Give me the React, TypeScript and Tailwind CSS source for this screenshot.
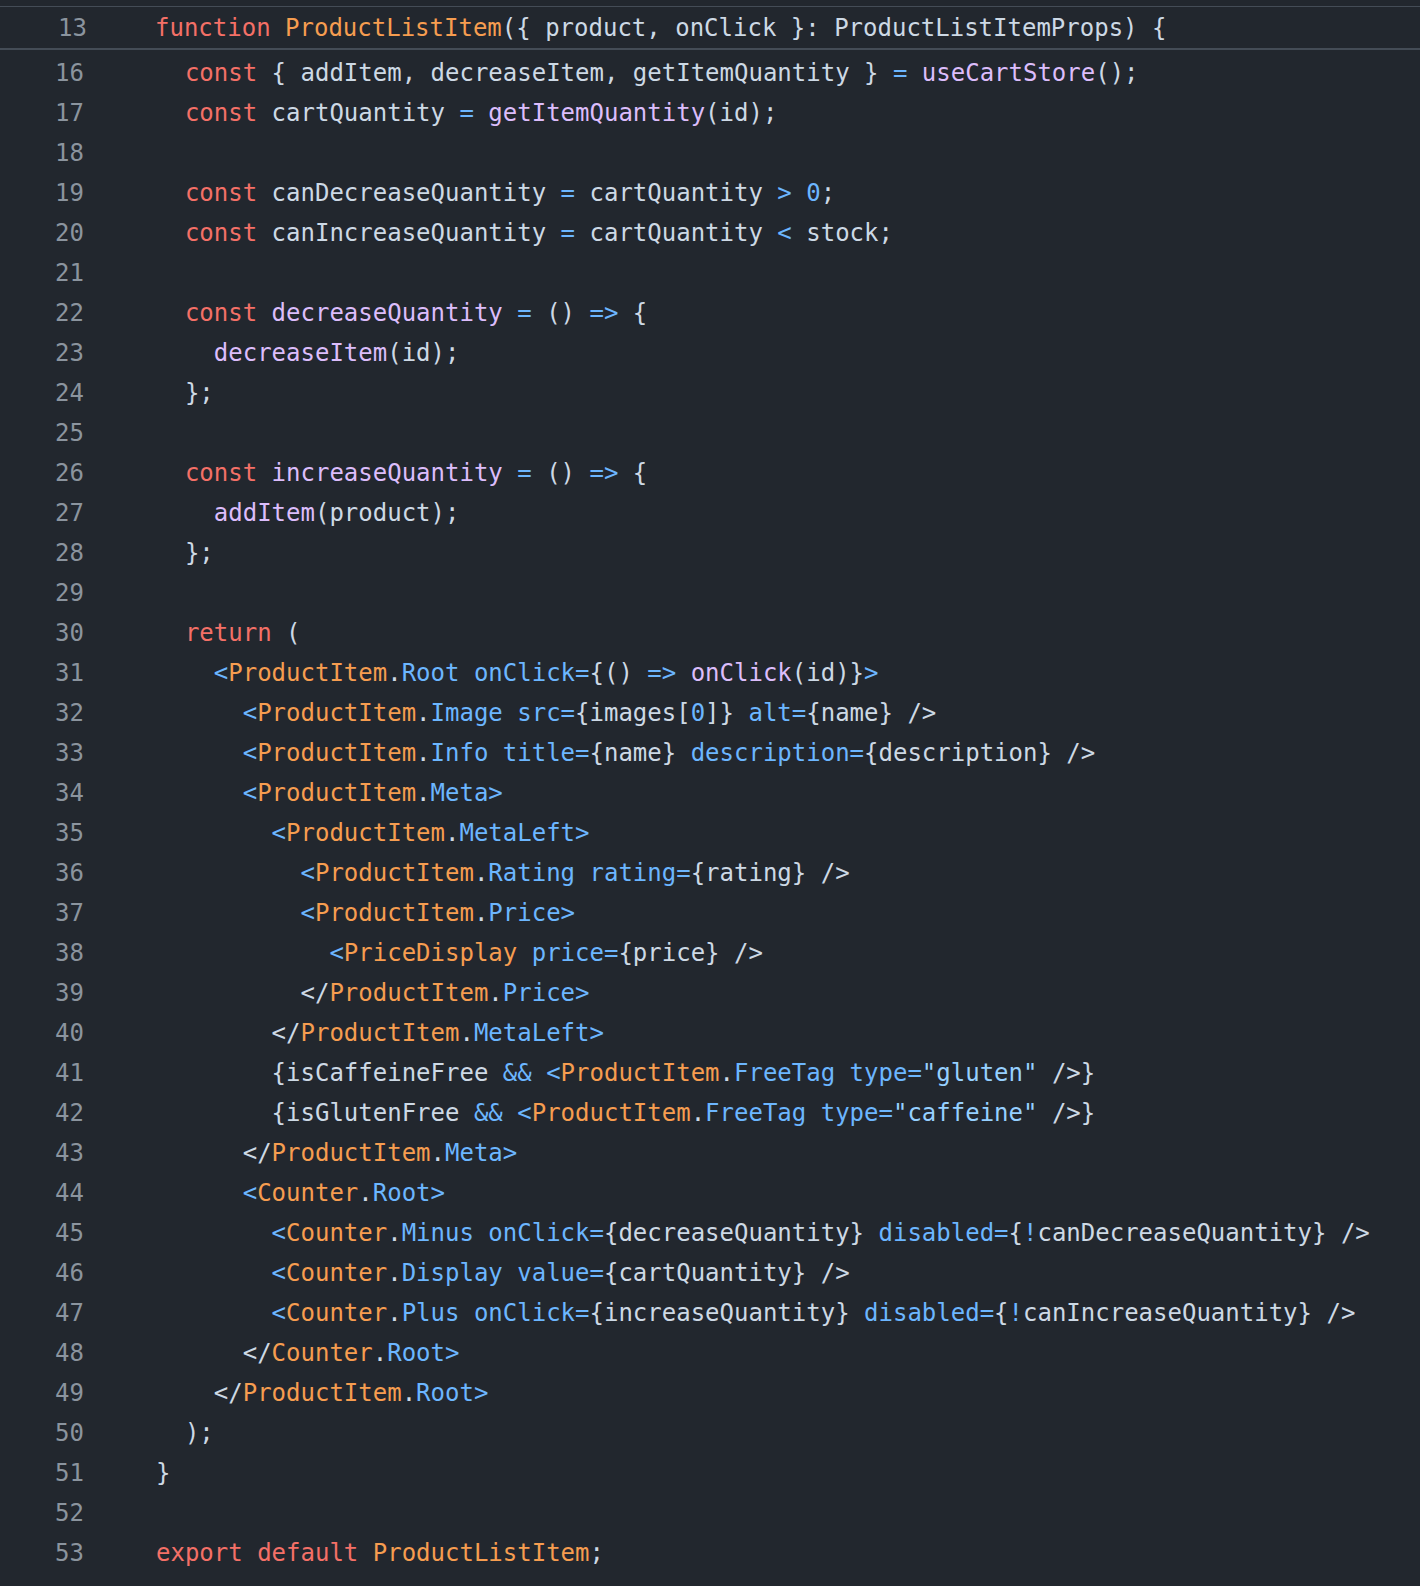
import React from "react";

type Seg = [string, string];

const C: Record<string, string> = {
  k: "text-[#f47067]",
  o: "text-[#f69d50]",
  p: "text-[#dcbdfb]",
  b: "text-[#6cb6ff]",
  s: "text-[#96d0ff]",
  t: "text-[#cdd9e5]",
};

const lines: [number, Seg[]][] = [
  [16, [["t", "  "], ["k", "const"], ["t", " { addItem, decreaseItem, getItemQuantity } "], ["b", "="], ["t", " "], ["p", "useCartStore"], ["t", "();"]]],
  [17, [["t", "  "], ["k", "const"], ["t", " cartQuantity "], ["b", "="], ["t", " "], ["p", "getItemQuantity"], ["t", "(id);"]]],
  [18, []],
  [19, [["t", "  "], ["k", "const"], ["t", " canDecreaseQuantity "], ["b", "="], ["t", " cartQuantity "], ["b", ">"], ["t", " "], ["b", "0"], ["t", ";"]]],
  [20, [["t", "  "], ["k", "const"], ["t", " canIncreaseQuantity "], ["b", "="], ["t", " cartQuantity "], ["b", "<"], ["t", " stock;"]]],
  [21, []],
  [22, [["t", "  "], ["k", "const"], ["t", " "], ["p", "decreaseQuantity"], ["t", " "], ["b", "="], ["t", " () "], ["b", "=>"], ["t", " {"]]],
  [23, [["t", "    "], ["p", "decreaseItem"], ["t", "(id);"]]],
  [24, [["t", "  };"]]],
  [25, []],
  [26, [["t", "  "], ["k", "const"], ["t", " "], ["p", "increaseQuantity"], ["t", " "], ["b", "="], ["t", " () "], ["b", "=>"], ["t", " {"]]],
  [27, [["t", "    "], ["p", "addItem"], ["t", "(product);"]]],
  [28, [["t", "  };"]]],
  [29, []],
  [30, [["t", "  "], ["k", "return"], ["t", " ("]]],
  [31, [["t", "    "], ["b", "<"], ["o", "ProductItem"], ["t", "."], ["b", "Root onClick="], ["t", "{() "], ["b", "=>"], ["t", " "], ["p", "onClick"], ["t", "(id)}"], ["b", ">"]]],
  [32, [["t", "      "], ["b", "<"], ["o", "ProductItem"], ["t", "."], ["b", "Image src="], ["t", "{images["], ["b", "0"], ["t", "]} "], ["b", "alt="], ["t", "{name} />"]]],
  [33, [["t", "      "], ["b", "<"], ["o", "ProductItem"], ["t", "."], ["b", "Info title="], ["t", "{name} "], ["b", "description="], ["t", "{description} />"]]],
  [34, [["t", "      "], ["b", "<"], ["o", "ProductItem"], ["t", "."], ["b", "Meta>"]]],
  [35, [["t", "        "], ["b", "<"], ["o", "ProductItem"], ["t", "."], ["b", "MetaLeft>"]]],
  [36, [["t", "          "], ["b", "<"], ["o", "ProductItem"], ["t", "."], ["b", "Rating rating="], ["t", "{rating} />"]]],
  [37, [["t", "          "], ["b", "<"], ["o", "ProductItem"], ["t", "."], ["b", "Price>"]]],
  [38, [["t", "            "], ["b", "<"], ["o", "PriceDisplay"], ["t", " "], ["b", "price="], ["t", "{price} />"]]],
  [39, [["t", "          </"], ["o", "ProductItem"], ["t", "."], ["b", "Price>"]]],
  [40, [["t", "        </"], ["o", "ProductItem"], ["t", "."], ["b", "MetaLeft>"]]],
  [41, [["t", "        {isCaffeineFree "], ["b", "&&"], ["t", " "], ["b", "<"], ["o", "ProductItem"], ["t", "."], ["b", "FreeTag type="], ["s", "\"gluten\""], ["t", " />}"]]],
  [42, [["t", "        {isGlutenFree "], ["b", "&&"], ["t", " "], ["b", "<"], ["o", "ProductItem"], ["t", "."], ["b", "FreeTag type="], ["s", "\"caffeine\""], ["t", " />}"]]],
  [43, [["t", "      </"], ["o", "ProductItem"], ["t", "."], ["b", "Meta>"]]],
  [44, [["t", "      "], ["b", "<"], ["o", "Counter"], ["t", "."], ["b", "Root>"]]],
  [45, [["t", "        "], ["b", "<"], ["o", "Counter"], ["t", "."], ["b", "Minus onClick="], ["t", "{decreaseQuantity} "], ["b", "disabled="], ["t", "{"], ["b", "!"], ["t", "canDecreaseQuantity} />"]]],
  [46, [["t", "        "], ["b", "<"], ["o", "Counter"], ["t", "."], ["b", "Display value="], ["t", "{cartQuantity} />"]]],
  [47, [["t", "        "], ["b", "<"], ["o", "Counter"], ["t", "."], ["b", "Plus onClick="], ["t", "{increaseQuantity} "], ["b", "disabled="], ["t", "{"], ["b", "!"], ["t", "canIncreaseQuantity} />"]]],
  [48, [["t", "      </"], ["o", "Counter"], ["t", "."], ["b", "Root>"]]],
  [49, [["t", "    </"], ["o", "ProductItem"], ["t", "."], ["b", "Root>"]]],
  [50, [["t", "  );"]]],
  [51, [["t", "}"]]],
  [52, []],
  [53, [["k", "export default"], ["t", " "], ["o", "ProductListItem"], ["t", ";"]]],
];

function Code({ segs }: { segs: Seg[] }) {
  return (
    <div className="whitespace-pre">
      {segs.map((s, i) => (
        <span key={i} className={C[s[0]]}>
          {s[1]}
        </span>
      ))}
    </div>
  );
}

export default function App() {
  return (
    <div
      className="min-h-screen w-full bg-[#22272e] pt-[6px] text-[24px] leading-[40px]"
      style={{ fontFamily: '"DejaVu Sans Mono", "Liberation Mono", monospace' }}
    >
      <div className="flex h-[44px] items-center border-t-[1px] border-b-[2px] border-[#444c56]">
        <div className="w-[87px] text-right text-[#8b949e]">13</div>
        <div className="ml-[68px]">
          <Code
            segs={[
              ["k", "function"],
              ["t", " "],
              ["o", "ProductListItem"],
              ["t", "({ product, onClick }: ProductListItemProps) {"],
            ]}
          />
        </div>
      </div>
      <div className="mt-[3px]">
        {lines.map(([n, segs]) => (
          <div key={n} className="flex h-[40px] items-center">
            <div className="w-[84px] text-right text-[#8b949e]">{n}</div>
            <div className="ml-[72px]">
              <Code segs={segs} />
            </div>
          </div>
        ))}
      </div>
    </div>
  );
}
